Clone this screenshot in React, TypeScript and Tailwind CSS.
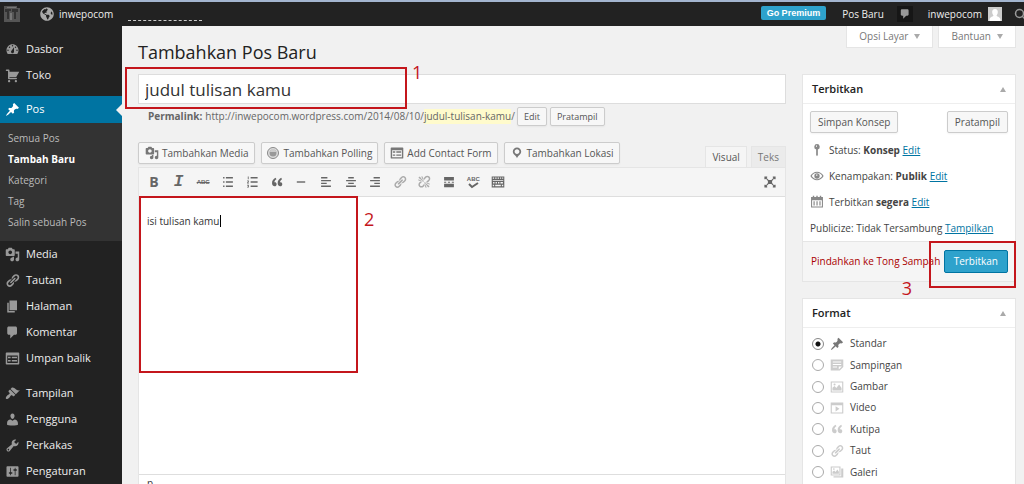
import React, { useState } from 'react';
import { FaGlobeAmericas } from 'react-icons/fa';
import { Search } from 'lucide-react';

// 20x20 icon shapes
const paths = {
  dashboard:
    'M3.76 16h12.48c1.1-1.37 1.76-3.11 1.76-5 0-4.42-3.58-8-8-8s-8 3.58-8 8c0 1.89.66 3.63 1.76 5zM10 4c.55 0 1 .45 1 1s-.45 1-1 1-1-.45-1-1 .45-1 1-1zM6 6c.55 0 1 .45 1 1s-.45 1-1 1-1-.45-1-1 .45-1 1-1zm8 0c.55 0 1 .45 1 1s-.45 1-1 1-1-.45-1-1 .45-1 1-1zm-5.37 5.55L12 7v6c0 1.1-.9 2-2 2s-2-.9-2-2c0-.57.24-1.08.63-1.45zM4 10c.55 0 1 .45 1 1s-.45 1-1 1-1-.45-1-1 .45-1 1-1zm12 0c.55 0 1 .45 1 1s-.45 1-1 1-1-.45-1-1 .45-1 1-1z',
  cart: 'M6 13h9c.55 0 1 .45 1 1s-.45 1-1 1H5c-.55 0-1-.45-1-1V4H2c-.55 0-1-.45-1-1s.45-1 1-1h3c.55 0 1 .45 1 1v2h13l-4 7H6v1zm-.5 3c.83 0 1.5.67 1.5 1.5S6.33 19 5.5 19 4 18.33 4 17.5 4.67 16 5.5 16zm9 0c.83 0 1.5.67 1.5 1.5s-.67 1.5-1.5 1.5-1.5-.67-1.5-1.5.67-1.5 1.5-1.5z',
  pin: 'M10.44 3.02l1.82-1.82 6.36 6.35-1.83 1.82c-1.05-.68-2.48-.57-3.41.36l-.75.75c-.92.93-1.04 2.35-.35 3.41l-1.83 1.82-2.41-2.41-2.8 2.79c-.42.42-3.38 2.71-3.8 2.29s1.86-3.39 2.28-3.81l2.79-2.79L4.1 9.36l1.83-1.82c1.05.69 2.48.57 3.4-.36l.75-.75c.93-.92 1.05-2.35.36-3.41z',
  media:
    'M13 11V4c0-.55-.45-1-1-1h-1.67L9 1H5L3.67 3H2c-.55 0-1 .45-1 1v7c0 .55.45 1 1 1h10c.55 0 1-.45 1-1zM7 4.5c1.38 0 2.5 1.12 2.5 2.5S8.38 9.5 7 9.5 4.5 8.38 4.5 7 5.62 4.5 7 4.5zM14 6h5v10.5c0 1.38-1.12 2.5-2.5 2.5S14 17.88 14 16.5s1.12-2.5 2.5-2.5c.17 0 .34.02.5.05V9h-3V6zm-4 8.05V13h2v3.5c0 1.38-1.12 2.5-2.5 2.5S7 17.88 7 16.5 8.12 14 9.5 14c.17 0 .34.02.5.05z',
  link: 'M17.74 2.76c1.68 1.69 1.68 4.41 0 6.1l-1.53 1.52c-1.12 1.12-2.7 1.47-4.14 1.09l2.62-2.61.76-.77.76-.76c.84-.84.84-2.2 0-3.04-.84-.85-2.2-.85-3.04 0l-.77.76-3.38 3.38c-.37-1.44-.02-3.02 1.1-4.14l1.52-1.53c1.69-1.68 4.42-1.68 6.1 0zM8.59 13.43l5.34-5.34c.42-.42.42-1.1 0-1.52-.44-.43-1.13-.39-1.53 0l-5.33 5.34c-.42.42-.42 1.1 0 1.52.44.43 1.13.39 1.52 0zm-.76 2.29l4.14-4.15c.38 1.44.03 3.02-1.09 4.14l-1.52 1.53c-1.69 1.68-4.41 1.68-6.1 0-1.68-1.68-1.68-4.42 0-6.1l1.53-1.52c1.12-1.12 2.7-1.47 4.14-1.1l-4.14 4.15c-.85.84-.85 2.2 0 3.05.84.84 2.2.84 3.04 0z',
  unlink:
    'M17.74 2.26c1.68 1.69 1.68 4.41 0 6.1l-1.53 1.52c-.32.33-.69.58-1.08.77L13 10l1.69-1.64.76-.77.76-.76c.84-.84.84-2.2 0-3.04-.84-.85-2.2-.85-3.04 0l-.77.76-.76.76L10 7l-.65-2.14c.19-.38.44-.75.77-1.07l1.52-1.53c1.69-1.68 4.42-1.68 6.1 0zM2 4l8 6-6-8zm4-2l4 8-2-8H6zM2 6l8 4-8-2V6zm7.36 7.69L10 13l.74 2.35-1.38 1.39c-1.69 1.68-4.41 1.68-6.1 0-1.68-1.68-1.68-4.42 0-6.1l1.39-1.38L7 10l-.69.64-1.52 1.53c-.85.84-.85 2.2 0 3.04.84.85 2.2.85 3.04 0zM18 16l-8-6 6 8zm-4 2l-4-8 2 8h2zm4-4l-8-4 8 2v2z',
  page: 'M6 15V2h10v13H6zm-1 1h8v2H3V5h2v11z',
  comment: 'M5 2h9c1.1 0 2 .9 2 2v7c0 1.1-.9 2-2 2h-2l-5 5v-5H5c-1.1 0-2-.9-2-2V4c0-1.1.9-2 2-2z',
  feedback:
    'M2 2h16c.55 0 1 .45 1 1v14c0 .55-.45 1-1 1H2c-.55 0-1-.45-1-1V3c0-.55.45-1 1-1zM3 6v10h14V6H3zM4 7.500h3.500v2H4zM9 7.500h7v2H9zM4 12h3.500v2H4zM9 12h7v2H9z',
  brush:
    'M14.48 11.06L7.41 3.99l1.5-1.5c.5-.56 2.3-.47 3.51.32 1.21.8 1.43 1.28 2.91 2.1 1.18.64 2.45 1.26 4.45.85zm-.71.71L6.7 4.7 4.93 6.47c-.39.39-.39 1.02 0 1.41l1.06 1.06c.39.39.39 1.03 0 1.42-.6.6-1.43 1.11-2.21 1.69-.35.26-.7.53-1.01.84C1.43 14.23.4 16.08 1.4 17.07c.99 1 2.84-.03 4.18-1.36.31-.31.58-.66.85-1.02.57-.78 1.08-1.61 1.69-2.21.39-.39 1.02-.39 1.41 0l1.06 1.06c.39.39 1.02.39 1.41 0z',
  user: 'M10 9.25c-2.27 0-2.73-3.44-2.73-3.44C7 4.02 7.82 2 9.97 2c2.16 0 2.98 2.02 2.71 3.81 0 0-.41 3.44-2.68 3.44zm0 2.57L12.720 10c2.39 0 4.52 2.33 4.520 4.53v2.49s-3.65 1.13-7.24 1.13c-3.65 0-7.24-1.13-7.24-1.13v-2.49c0-2.250 1.940-4.480 4.470-4.480z',
  tools:
    'M16.68 9.77c-1.34 1.34-3.3 1.67-4.95.99l-5.41 6.52c-.99.99-2.59.99-3.58 0s-.99-2.59 0-3.57l6.52-5.42c-.68-1.65-.35-3.61.99-4.95 1.28-1.28 3.12-1.62 4.72-1.06l-2.89 2.89 2.82 2.82 2.86-2.87c.53 1.58.18 3.39-1.08 4.65zM3.81 16.21c.4.39 1.04.39 1.43 0 .4-.4.4-1.04 0-1.43-.39-.4-1.03-.4-1.43 0-.39.39-.39 1.03 0 1.43z',
  settings:
    'M18 16V4c0-.55-.45-1-1-1H3c-.55 0-1 .45-1 1v12c0 .55.45 1 1 1h14c.55 0 1-.45 1-1zM8 11h1c.55 0 1 .45 1 1s-.45 1-1 1H8v1.5c0 .28-.22.5-.5.5s-.5-.22-.5-.5V13H6c-.55 0-1-.45-1-1s.45-1 1-1h1V5.500c0-.28.22-.5.5-.5s.5.22.5.5V11zm5-2h-1c-.55 0-1-.45-1-1s.45-1 1-1h1V5.500c0-.28.22-.5.5-.5s.5.22.5.5V7h1c.55 0 1 .45 1 1s-.45 1-1 1h-1v5.500c0 .28-.22.5-.5.5s-.5-.22-.5-.5V9z',
  quote:
    'M9.49 13.22c0-.74-.2-1.38-.61-1.9-.62-.78-1.83-.88-2.53-.72-.29-1.65 1.11-3.75 2.92-4.65L7.88 4c-2.73 1.3-5.42 4.28-4.96 8.05C3.21 14.43 4.59 16 6.54 16c.85 0 1.56-.25 2.12-.75s.83-1.18.83-2.03zm8.05 0c0-.74-.2-1.38-.61-1.9-.63-.78-1.83-.88-2.53-.72-.29-1.65 1.11-3.75 2.92-4.65L15.93 4c-2.73 1.3-5.41 4.28-4.95 8.05.29 2.38 1.66 3.95 3.61 3.95.85 0 1.56-.25 2.12-.75s.83-1.18.83-2.03z',
  ul: 'M3 3h2v2H3zM7 3h10v2H7zM3 9h2v2H3zM7 9h10v2H7zM3 15h2v2H3zM7 15h10v2H7z',
  ol: 'M4 2h1.200v4H4zM3 8h2.500v1.500L4.500 11h1v1H3v-1l1.500-2H3zM3 14h2.500v4H3v-1h1.300v-.5H3.500v-1h.8V15H3zM8 3h10v2H8zM8 9h10v2H8zM8 15h10v2H8z',
  hr: 'M4 9h12v2H4z',
  left: 'M3 3h9v2H3zM3 7h14v2H3zM3 11h8v2H3zM3 15h14v2H3z',
  center: 'M6 3h8v2H6zM3 7h14v2H3zM6 11h8v2H6zM3 15h14v2H3z',
  right: 'M8 3h9v2H8zM3 7h14v2H3zM9 11h8v2H9zM3 15h14v2H3z',
  more: 'M3 3h14v5H3zM3 9.500h3v1.500H3zM8.500 9.500h3v1.500h-3zM14 9.500h3v1.500h-3zM3 12.500h14v5H3z',
  kitchen:
    'M1 2h18v16H1zM2.500 3.500v2h2v-2zM6 3.500v2h2v-2zM9.500 3.500v2h2v-2zM13 3.500v2h1.500v-2zM16 3.500v2h1.500v-2zM2.500 7v1.200h15V7zM3 10v2h2v-2zM6.500 10v2h2v-2zM10 10v2h2v-2zM13.500 10v2h3.500v-2zM2.500 14v2h2v-2zM6 14v2h8v-2zM15.500 14v2h2v-2z',
  expand:
    'M2 2h4v1.500L5.200 4.300 8 7h4l2.800-2.700-.8-.8V2h4v4h-1.500l-.8-.7L13 8.500v3l2.700 3.200.8-.7H18v4h-4v-1.500l.8-.8L12 13H8l-2.800 2.700.8.8V18H2v-4h1.500l.8.7L7 11.500v-3L4.300 5.300 3.500 6H2z',
  marker:
    'M10 2C6.69 2 4 4.690 4 8c0 2.020 1.170 3.710 2.530 4.890.43.37 1.180.96 1.850 1.830.74.97 1.410 2.010 1.620 2.710.21-.7.88-1.740 1.620-2.710.67-.87 1.420-1.460 1.850-1.830C14.830 11.710 16 10.020 16 8c0-3.310-2.690-6-6-6zm0 2.560c1.900 0 3.440 1.540 3.440 3.440S11.900 11.440 10 11.440 6.560 9.900 6.560 8 8.100 4.560 10 4.560z',
  status: 'M10 1.500a4 4 0 0 1 1.200 7.800V17L10 19l-1.200-2V9.300A4 4 0 0 1 10 1.500zM8.500 3.500v2h1.500v-2z',
  eye: 'M10 4c4 0 7.500 2.500 9.500 6-2 3.500-5.500 6-9.500 6S2.500 13.500.5 10C2.500 6.500 6 4 10 4zM10 5.500c-3 0-5.800 1.800-7.500 4.500 1.700 2.700 4.500 4.500 7.500 4.500s5.800-1.800 7.500-4.500C15.800 7.300 13 5.500 10 5.500zM10 6.200a3.800 3.800 0 1 1 0 7.600 3.800 3.800 0 0 1 0-7.600zM8.800 7.800v1.800h1.700V7.800z',
  calendar:
    'M4 1h2v2h3V1h2v2h3V1h2v2h2.500v15h-17V3H4zM3 7.500v9h14v-9zM5 9h1.700v6H5zM9.200 9h1.700v6H9.200zM13.400 9h1.700v6h-1.700z',
  aside: 'M1 2h18v11l-5 5H1zM4 5v1.600h12V5zM4 8.500v1.600h12V8.500zM4 12v1.600h6V12zM12.500 12v4.500l4.500-4.500z',
  image: 'M1 2h18v16H1zM2.600 3.600v12.800h14.800V3.600zM3.500 15v-4l3-2.500 2.500 3 4-5 3.500 5V15zM6.500 5a1.500 1.500 0 1 1 0 3 1.500 1.500 0 0 1 0-3z',
  video: 'M1 2h18v16H1zM2.600 6v10.400h14.800V6zM8 7.500l5.500 3.700L8 15z',
  gallery: 'M1 2h14v13H1zM2.600 3.600v9.800h10.800V3.600zM3.500 12.500V9.800L6 8l2 2 2.500-3.500 2.200 3v3zM5.500 4.500a1.200 1.200 0 1 1 0 2.400 1.200 1.200 0 0 1 0-2.400zM16 5h3v13H5v-2h11z',
};

type IconName = keyof typeof paths;

const Icon = ({ name, className = '' }: { name: IconName; className?: string }) => (
  <svg viewBox="0 0 20 20" fill="currentColor" fillRule="evenodd" aria-hidden="true" className={`shrink-0 ${className}`}>
    <path d={paths[name]} />
  </svg>
);

const TopBar = () => (
  <header className="flex h-[26px] shrink-0 items-center border-t-2 border-[#a3b5cf] bg-[#222] pl-1 text-[10px] text-[#eee]">
    <svg viewBox="0 0 16 16" className="h-4 w-4 shrink-0" aria-hidden="true">
      <path fill="#555" d="M0 0h13v2h3v14H0z" />
      <path fill="#333" d="M1 3h6v2H5v8H3V6H1zM8 3h6v3h-2v7h-2V6H8z" />
      <path fill="#777" d="M3 1h9v1H3zM6 7h2v7H6z" />
    </svg>
    <a href="#site" className="ml-5 flex items-center gap-[5px]">
      <FaGlobeAmericas className="h-[14px] w-[14px] text-[#aaa]" />
      inwepocom
    </a>
    <div className="ml-[15px] mt-3 w-[74px] border-t border-dashed border-[#ccc]"></div>
    <div className="ml-auto flex items-center">
      <a href="#premium" className="mb-[3px] h-[14px] rounded-xs bg-[#2ea2cc] px-[6px] font-['Liberation_Sans'] text-[9px] leading-[14px] font-bold text-white">
        Go Premium
      </a>
      <a href="#new" className="ml-4">Pos Baru</a>
      <a href="#comments" aria-label="Komentar" className="ml-[13px] flex h-4 w-4 items-center justify-center bg-[#161616]">
        <Icon name="comment" className="h-3 w-3 text-[#999]" />
      </a>
      <a href="#profile" className="ml-[15px] flex items-center gap-[6px]">
        inwepocom
        <svg viewBox="0 0 14 14" className="h-[14px] w-[14px]" aria-hidden="true">
          <path fill="#ccc" d="M0 0h14v14H0z" />
          <path fill="#fff" d="M7 2c2 0 3 1.500 2.800 3.300-.2 1.700-.8 2.700-1.300 3.200 0 1 3.500 1.200 4 4V14h-11v-1.500c.5-2.800 4-3 4-4-.5-.5-1.100-1.500-1.300-3.200C4 3.500 5 2 7 2z" />
        </svg>
      </a>
      <button aria-label="Cari" className="ml-3 w-[10px] overflow-hidden text-[#999]">
        <Search className="h-3 w-3" strokeWidth={3} />
      </button>
    </div>
  </header>
);

const MenuItem = ({ icon, label }: { icon: IconName; label: string }) => (
  <li>
    <a href="#menu" className="flex h-[26px] items-center gap-[6px] pl-[5px] text-[11px] text-[#eee]">
      <Icon name={icon} className="h-[15px] w-[15px] text-[#999]" />
      {label}
    </a>
  </li>
);

const Sidebar = () => {
  const content: [IconName, string][] = [
    ['media', 'Media'],
    ['link', 'Tautan'],
    ['page', 'Halaman'],
    ['comment', 'Komentar'],
    ['feedback', 'Umpan balik'],
  ];
  const admin: [IconName, string][] = [
    ['brush', 'Tampilan'],
    ['user', 'Pengguna'],
    ['tools', 'Perkakas'],
    ['settings', 'Pengaturan'],
  ];
  const submenu = ['Semua Pos', 'Tambah Baru', 'Kategori', 'Tag', 'Salin sebuah Pos'];

  return (
    <nav className="w-[122px] shrink-0 bg-[#222] pt-[10px]">
      <ul>
        <MenuItem icon="dashboard" label="Dasbor" />
        <MenuItem icon="cart" label="Toko" />
      </ul>
      <a href="#pos" className="mt-2 flex h-[27px] items-center gap-[6px] bg-[#0074a2] pl-[5px] text-[11px] text-white">
        <Icon name="pin" className="h-[15px] w-[15px]" />
        Pos
        <span className="ml-auto border-y-[6px] border-r-[6px] border-y-transparent border-r-[#f1f1f1]"></span>
      </a>
      <ul className="bg-[#333] pt-[5px] pb-2 text-[10px]">
        {submenu.map((label) => (
          <li key={label}>
            <a
              href="#sub"
              className={`block h-[21px] pl-2 leading-[21px] ${label === 'Tambah Baru' ? 'font-bold text-white' : 'text-[#bbb]'}`}
            >
              {label}
            </a>
          </li>
        ))}
      </ul>
      <ul>
        {content.map(([icon, label]) => (
          <MenuItem key={label} icon={icon} label={label} />
        ))}
      </ul>
      <ul className="mt-[9px]">
        {admin.map(([icon, label]) => (
          <MenuItem key={label} icon={icon} label={label} />
        ))}
      </ul>
    </nav>
  );
};

const buttonStyle = 'rounded-xs border border-[#ccc] bg-[#f7f7f7] text-[#555] shadow-xs whitespace-nowrap';

const MediaButtons = () => (
  <div className="flex items-center gap-[6px] pb-[3px] text-[10px]">
    <button className={`flex h-[22px] items-center gap-[3px] px-[6px] ${buttonStyle}`}>
      <Icon name="media" className="h-[14px] w-[14px] text-[#777]" />
      Tambahkan Media
    </button>
    <button className={`flex h-[22px] items-center gap-1 px-[5px] ${buttonStyle}`}>
      <svg viewBox="0 0 12 12" className="h-3 w-3 shrink-0" aria-hidden="true">
        <circle cx="6" cy="6" r="5.500" fill="#ddd" stroke="#888" />
        <circle cx="6" cy="6" r="3.500" fill="#999" />
        <path fill="#ccc" d="M3 5a3 3 0 0 1 6 0z" />
      </svg>
      Tambahkan Polling
    </button>
    <button className={`flex h-[22px] items-center gap-[3px] px-[5px] ${buttonStyle}`}>
      <Icon name="feedback" className="h-[14px] w-[14px] text-[#777]" />
      Add Contact Form
    </button>
    <button className={`flex h-[22px] items-center gap-[3px] px-[5px] ${buttonStyle}`}>
      <Icon name="marker" className="h-[14px] w-[14px] text-[#777]" />
      Tambahkan Lokasi
    </button>
  </div>
);

const Toolbar = () => {
  const tools: [IconName, string][] = [
    ['ul', 'Daftar berpoin'],
    ['ol', 'Daftar bernomor'],
    ['quote', 'Kutipan blok'],
    ['hr', 'Garis horizontal'],
    ['left', 'Rata kiri'],
    ['center', 'Rata tengah'],
    ['right', 'Rata kanan'],
    ['link', 'Sisipkan tautan'],
    ['unlink', 'Hapus tautan'],
    ['more', 'Sisipkan tag Read More'],
  ];

  return (
    <div className="flex h-[29px] items-center justify-between border-b border-[#dedede] bg-[#f5f5f5] pr-2 pl-[5px] text-[#666]">
      <div className="flex w-[364px] items-center justify-between">
        <button aria-label="Tebal" className="w-5 text-center text-sm leading-5 font-bold">B</button>
        <button aria-label="Miring" className="w-5 text-center font-['Liberation_Mono'] text-base leading-5 font-bold italic">I</button>
        <button aria-label="Coret" className="w-5 text-center font-['Liberation_Sans'] text-[6px] leading-5 font-bold line-through">ABC</button>
        {tools.map(([icon, label]) => (
          <button key={label} aria-label={label} className="flex w-5 justify-center">
            <Icon
              name={icon}
              className={icon === 'link' || icon === 'unlink' ? 'h-[14px] w-[14px] text-[#aaa]' : 'h-[14px] w-[14px]'}
            />
          </button>
        ))}
        <button aria-label="Periksa ejaan" className="flex w-5 flex-col items-center font-['Liberation_Sans'] text-[6px] leading-[6px] font-bold">
          ABC
          <svg viewBox="0 0 12 7" className="h-[7px] w-3" fill="none" stroke="currentColor" strokeWidth="2" aria-hidden="true">
            <path d="M2 2l3 3 6-4" />
          </svg>
        </button>
        <button aria-label="Toolbar tambahan" className="flex w-5 justify-center">
          <Icon name="kitchen" className="h-[14px] w-[14px]" />
        </button>
      </div>
      <button aria-label="Layar penuh">
        <Icon name="expand" className="h-[14px] w-[14px]" />
      </button>
    </div>
  );
};

const Editor = () => {
  const [title, setTitle] = useState('judul tulisan kamu');
  const [body, setBody] = useState('isi tulisan kamu');

  return (
    <main className="min-w-0 flex-1">
      <div className="relative">
        <input
          aria-label="Judul"
          value={title}
          onChange={(e) => setTitle(e.target.value)}
          className="block h-[30px] w-full border border-[#ddd] bg-white px-[6px] text-[17px] text-[#333] outline-none"
        />
        {/* Step 1 */}
        <div className="pointer-events-none absolute -top-[7px] -left-[13px] h-[42px] w-[282px] border-2 border-[#c4161c]"></div>
        <span className="absolute -top-[14px] left-[274px] text-lg leading-6 text-[#c4161c]">1</span>
      </div>

      <div className="flex items-center pt-[3px] pl-[10px] text-[10px] text-[#666]">
        <strong className="mr-[3px]">Permalink:</strong>
        <span>http://inwepocom.wordpress.com/2014/08/10/</span>
        <span className="bg-[#fffbcc]">judul-tulisan-kamu</span>/
        <button className={`ml-[2px] h-[19px] px-[6px] text-[9px] ${buttonStyle}`}>Edit</button>
        <button className={`ml-[3px] h-[19px] px-[6px] text-[9px] ${buttonStyle}`}>Pratampil</button>
      </div>

      <div className="mt-4 flex items-end justify-between">
        <MediaButtons />
        <div className="flex gap-1 text-[10px] leading-5">
          <button className="h-[21px] border border-b-0 border-[#e5e5e5] bg-[#f5f5f5] px-[6px] text-[#555]">Visual</button>
          <button className="h-[21px] border border-b-0 border-[#e5e5e5] bg-[#ebebeb] px-[6px] text-[#777]">Teks</button>
        </div>
      </div>

      <div className="border border-[#e5e5e5] bg-white">
        <Toolbar />
        <div className="relative">
          <textarea
            aria-label="Isi tulisan"
            value={body}
            onChange={(e) => setBody(e.target.value)}
            className="block h-[277px] w-full resize-none px-2 pt-4 text-[10px] leading-4 text-[#333] outline-none"
          />
          <span className="pointer-events-none absolute top-[18px] left-[81px] h-3 w-px bg-black"></span>
          {/* Step 2 */}
          <div className="pointer-events-none absolute -top-px left-0 h-[177px] w-[219px] border-2 border-[#c4161c]"></div>
          <span className="absolute top-[10px] left-[225px] text-lg leading-6 text-[#c4161c]">2</span>
        </div>
        <div className="border-t border-[#dedede] px-2 text-[10px] leading-4 text-[#333]">p</div>
      </div>
    </main>
  );
};

const BoxHeader = ({ title }: { title: string }) => (
  <div className="flex h-[29px] items-center justify-between border-b border-[#eee] px-[9px]">
    <h2 className="text-[11px] font-semibold text-[#222]">{title}</h2>
    <button aria-label={`Lipat ${title}`} className="border-x-[3px] border-b-[5px] border-x-transparent border-b-[#aaa]"></button>
  </div>
);

const EditLink = ({ label = 'Edit' }: { label?: string }) => (
  <a href="#edit" className="text-[#0074a2] underline">{label}</a>
);

const PublishBox = () => (
  <section className="border border-[#e5e5e5] bg-white">
    <BoxHeader title="Terbitkan" />
    <div className="px-[7px] pt-[7px] text-[10px] text-[#444]">
      <div className="flex justify-between">
        <button className={`h-[22px] px-[7px] ${buttonStyle}`}>Simpan Konsep</button>
        <button className={`h-[22px] px-[7px] ${buttonStyle}`}>Pratampil</button>
      </div>
      <div className="mt-1 leading-[26px]">
        <p className="flex items-center gap-[5px]">
          <Icon name="status" className="h-[14px] w-[14px] text-[#888]" />
          <span>Status: <b>Konsep</b> <EditLink /></span>
        </p>
        <p className="flex items-center gap-[5px]">
          <Icon name="eye" className="h-[14px] w-[14px] text-[#888]" />
          <span>Kenampakan: <b>Publik</b> <EditLink /></span>
        </p>
        <p className="flex items-center gap-[5px]">
          <Icon name="calendar" className="h-[14px] w-[14px] text-[#888]" />
          <span>Terbitkan <b>segera</b> <EditLink /></span>
        </p>
        <p>Publicize: Tidak Tersambung <EditLink label="Tampilkan" /></p>
      </div>
    </div>
    <div className="flex h-[40px] items-center justify-between border-t border-[#e5e5e5] bg-[#f5f5f5] pr-[7px] pl-2 text-[10px] whitespace-nowrap">
      <a href="#trash" className="text-[#a00]">Pindahkan ke Tong Sampah</a>
      <div className="relative">
        <button className="block h-[23px] rounded-xs border border-[#0074a2] bg-[#2ea2cc] px-[9px] text-white">Terbitkan</button>
        {/* Step 3 */}
        <div className="pointer-events-none absolute -top-[9px] -right-2 h-[47px] w-[87px] border-2 border-[#c4161c]"></div>
        <span className="absolute top-[26px] -left-[42px] text-lg leading-6 text-[#c4161c]">3</span>
      </div>
    </div>
  </section>
);

const FormatBox = () => {
  const [format, setFormat] = useState('Standar');
  const formats: [IconName, string][] = [
    ['pin', 'Standar'],
    ['aside', 'Sampingan'],
    ['image', 'Gambar'],
    ['video', 'Video'],
    ['quote', 'Kutipa'],
    ['link', 'Taut'],
    ['gallery', 'Galeri'],
  ];

  return (
    <section className="border border-[#e5e5e5] bg-white">
      <BoxHeader title="Format" />
      <div className="grid h-[161px] auto-rows-fr pt-[5px] pb-[6px] text-[10px] text-[#444]">
        {formats.map(([icon, label]) => (
          <label key={label} className="flex items-center pl-[9px]">
            <input
              type="radio"
              name="format"
              checked={format === label}
              onChange={() => setFormat(label)}
              className="h-3 w-3 appearance-none rounded-full border border-[#aaa] bg-white checked:border-[#888] checked:bg-[radial-gradient(circle,#111_0_2px,#fff_3px)]"
            />
            <Icon name={icon} className={`ml-[6px] h-[14px] w-[14px] ${icon === 'pin' ? 'text-[#777]' : 'text-[#ccc]'}`} />
            <span className="ml-[6px]">{label}</span>
          </label>
        ))}
      </div>
    </section>
  );
};

const App = () => {
  return (
    <div className="flex h-screen flex-col overflow-hidden bg-[#f1f1f1] font-['Open_Sans',sans-serif]">
      <TopBar />
      <div className="flex flex-1">
        <Sidebar />
        <div className="min-w-0 flex-1 pr-2 pl-4">
          <div className="flex h-12 items-start justify-between">
            <h1 className="pt-3 text-lg leading-7 text-[#222]">Tambahkan Pos Baru</h1>
            <div className="flex gap-[5px] text-[10px] text-[#777]">
              {['Opsi Layar', 'Bantuan'].map((label) => (
                <button key={label} className="flex h-[22px] items-center gap-[6px] border border-t-0 border-[#e5e5e5] bg-white px-3">
                  {label}
                  <span className="border-x-[3px] border-t-[5px] border-x-transparent border-t-[#aaa]"></span>
                </button>
              ))}
            </div>
          </div>
          <div className="flex gap-4">
            <Editor />
            <aside className="w-[214px] shrink-0 space-y-4">
              <PublishBox />
              <FormatBox />
            </aside>
          </div>
        </div>
      </div>
    </div>
  );
};

export default App;
